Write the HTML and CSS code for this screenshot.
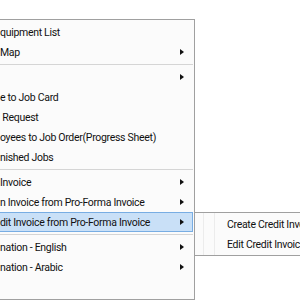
FILE: index.html
```html
<!DOCTYPE html>
<html>
<head>
<meta charset="utf-8">
<link rel="stylesheet" href="styles.css">
</head>
<body>
<div class="menu">
  <div class="item"><span class="label">quipment List</span></div>
  <div class="item"><span class="label">Map</span><span class="arrow"></span></div>
  <div class="sep"></div>
  <div class="item"><span class="label"></span><span class="arrow"></span></div>
  <div class="item"><span class="label">e to Job Card</span></div>
  <div class="item"><span class="label">&nbsp;Request</span></div>
  <div class="item"><span class="label">oyees to Job Order(Progress Sheet)</span></div>
  <div class="item"><span class="label">nished Jobs</span></div>
  <div class="sep"></div>
  <div class="item"><span class="label">Invoice</span><span class="arrow"></span></div>
  <div class="item"><span class="label">n Invoice from Pro-Forma Invoice</span><span class="arrow"></span></div>
  <div class="item active"><span class="label">dit Invoice from Pro-Forma Invoice</span><span class="arrow"></span></div>
  <div class="sep"></div>
  <div class="item"><span class="label">nation - English</span><span class="arrow"></span></div>
  <div class="item"><span class="label">nation - Arabic</span><span class="arrow"></span></div>
  <div class="item"><span class="label"></span></div>
</div>
<div class="submenu">
  <div class="subitem">Create Credit Invoice</div>
  <div class="subitem">Edit Credit Invoice</div>
</div>
</body>
</html>
```
FILE: styles.css
```css
html, body {
  margin: 0;
  padding: 0;
  background: #ffffff;
  width: 300px;
  height: 300px;
  overflow: hidden;
  font-family: Roboto, "Noto Sans", sans-serif;
  font-size: 10.5px;
  letter-spacing: -0.3px;
  color: #111;
}
.menu {
  box-sizing: border-box;
  width: 225px;
  margin-top: 19px;
  margin-left: -30px;
  padding: 2px 1px 2px 0;
  background: #fbfbfb;
  border: 1px solid #a0a0a0;
}
.item {
  box-sizing: border-box;
  height: 20px;
  display: flex;
  align-items: center;
  padding: 0 8px 0 29px;
  border: 1px solid transparent;
  white-space: nowrap;
}
.item.active {
  background: #c9e0f7;
  border-color: #78ade3;
}
.label {
  flex: 1;
  margin-left: -1px;
}
.arrow {
  width: 0;
  height: 0;
  border-top: 3px solid transparent;
  border-bottom: 3px solid transparent;
  border-left: 4px solid #111;
}
.sep {
  height: 1px;
  margin: 2px 0;
  background: #d5d5d5;
}
.submenu {
  position: absolute;
  left: 194px;
  top: 212px;
  box-sizing: border-box;
  width: 130px;
  height: 44px;
  padding: 2px 0 1px 32px;
  background: #fbfbfb;
  border: 1px solid #a0a0a0;
  white-space: nowrap;
}
.submenu::before {
  content: "";
  position: absolute;
  left: 8px;
  top: 0;
  bottom: 0;
  width: 10px;
  border-left: 1px solid #ececec;
  border-right: 1px solid #ececec;
}
.subitem {
  height: 20px;
  line-height: 20px;
}
```
